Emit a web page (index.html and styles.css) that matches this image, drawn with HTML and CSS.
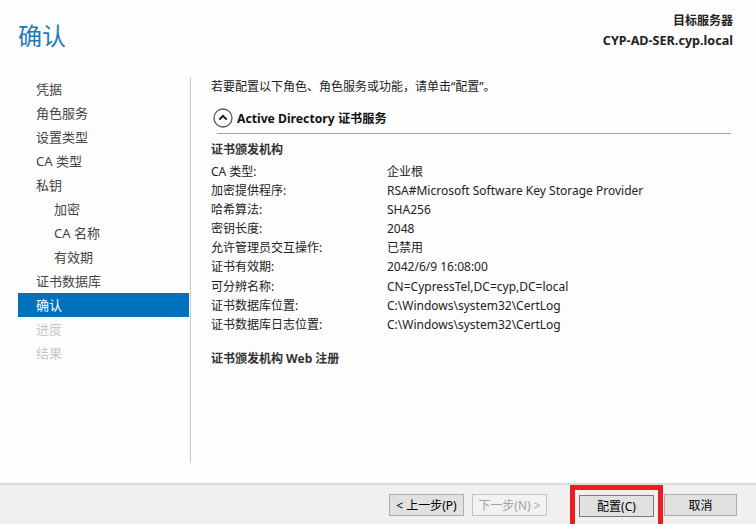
FILE: index.html
```html
<!DOCTYPE html>
<html lang="zh-CN">
<head>
    <meta charset="UTF-8">
    <title>确认</title>
    <link rel="stylesheet" href="styles.css">
</head>
<body>
    <div class="wizard">
        <div class="header">
            <h1 class="title">确认</h1>
            <div class="target">
                <div>目标服务器</div>
                <div>CYP-AD-SER.cyp.local</div>
            </div>
        </div>

        <div class="main">
            <ul class="nav">
                <li>凭据</li>
                <li>角色服务</li>
                <li>设置类型</li>
                <li>CA 类型</li>
                <li>私钥</li>
                <li class="sub">加密</li>
                <li class="sub">CA 名称</li>
                <li class="sub">有效期</li>
                <li>证书数据库</li>
                <li class="active">确认</li>
                <li class="disabled">进度</li>
                <li class="disabled">结果</li>
            </ul>

            <div class="content">
                <p class="intro">若要配置以下角色、角色服务或功能，请单击“配置”。</p>

                <div class="section-head">
                    <svg class="collapse" width="20" height="20" viewBox="0 0 20 20">
                        <circle cx="10" cy="10" r="9" fill="none" stroke="#5a5a5a" stroke-width="1.3"/>
                        <path d="M6.3 11.6 L10 7.9 L13.7 11.6" fill="none" stroke="#1a1a1a" stroke-width="2"/>
                    </svg>
                    <span>Active Directory 证书服务</span>
                </div>
                <div class="rule"></div>

                <div class="group-title">证书颁发机构</div>
                <div class="props">
                    <span>CA 类型:</span><span>企业根</span>
                    <span>加密提供程序:</span><span>RSA#Microsoft Software Key Storage Provider</span>
                    <span>哈希算法:</span><span>SHA256</span>
                    <span>密钥长度:</span><span>2048</span>
                    <span>允许管理员交互操作:</span><span>已禁用</span>
                    <span>证书有效期:</span><span>2042/6/9 16:08:00</span>
                    <span>可分辨名称:</span><span>CN=CypressTel,DC=cyp,DC=local</span>
                    <span>证书数据库位置:</span><span>C:\Windows\system32\CertLog</span>
                    <span>证书数据库日志位置:</span><span>C:\Windows\system32\CertLog</span>
                </div>

                <div class="group-title web">证书颁发机构 Web 注册</div>
            </div>
        </div>

        <div class="footer">
            <button class="btn">&lt; 上一步(P)</button>
            <button class="btn" disabled>下一步(N) &gt;</button>
            <div class="mark">
                <button class="btn">配置(C)</button>
            </div>
            <button class="btn">取消</button>
        </div>
    </div>
</body>
</html>
```

FILE: styles.css
```css
html, body {
    margin: 0;
    padding: 0;
    overflow: hidden;
}
body {
    font-family: "Noto Sans", "Noto Sans CJK SC", sans-serif;
    background: #fdfdfd;
    color: #222;
}
.wizard {
    height: 524px;
    display: flex;
    flex-direction: column;
}
.header {
    height: 77px;
    display: flex;
    justify-content: space-between;
    align-items: flex-start;
    padding: 0 23px 0 18px;
    box-sizing: border-box;
}
.title {
    margin: 19px 0 0;
    font-size: 24px;
    font-weight: normal;
    line-height: 34px;
    color: #1b7bb8;
}
.target {
    margin-top: 11px;
    text-align: right;
    font-size: 12px;
    font-weight: bold;
    line-height: 20px;
    color: #222;
}
.target div + div {
    font-size: 12.6px;
}
.main {
    flex: 1;
    display: flex;
    padding-bottom: 20px;
}
.nav {
    list-style: none;
    margin: 0;
    padding: 0 0 0 18px;
    width: 172px;
    border-right: 1px solid #c9c9c9;
}
.nav li {
    height: 24px;
    line-height: 24px;
    padding-left: 18px;
    font-size: 13px;
    color: #444;
    margin-right: 1px;
}
.nav li.sub {
    padding-left: 36px;
}
.nav li.active {
    background: #0072bc;
    color: #fff;
}
.nav li.disabled {
    color: #c8c8c8;
}
.content {
    flex: 1;
    padding: 0 25px 0 20px;
    font-size: 12px;
}
.intro {
    margin: 0;
    line-height: 20px;
}
.section-head {
    display: flex;
    align-items: center;
    margin-top: 11px;
    height: 20px;
    font-size: 12.2px;
    font-weight: bold;
    color: #111;
}
.collapse {
    margin: 0 4px 0 2px;
}
.rule {
    margin: 5px 0 0 6px;
    border-top: 1px solid #a5a5a5;
}
.group-title {
    margin-top: 6px;
    line-height: 20px;
    font-weight: bold;
    color: #333;
}
.group-title.web {
    margin-top: 15px;
}
.props {
    margin-top: 2px;
    display: grid;
    grid-template-columns: 176px 1fr;
    line-height: 19.1px;
    color: #222;
}
.footer {
    height: 41px;
    box-sizing: border-box;
    border-top: 2px solid #dadada;
    background: #f0f0f0;
    display: flex;
    align-items: flex-start;
    padding-left: 389px;
    overflow: hidden;
}
.btn {
    width: 75px;
    height: 22px;
    margin-top: 9px;
    margin-right: 8px;
    padding: 0;
    font-family: inherit;
    font-size: 12px;
    color: #000;
    background: #e1e1e1;
    border: 1px solid #adadad;
}
.btn:disabled {
    color: #a3a3a3;
    background: #f2f2f2;
    border-color: #c4c4c4;
    margin-right: 23px;
}
.mark {
    border: 5px solid #ec1c24;
    padding: 4px 4px 30px;
}
.mark .btn {
    margin: 0;
    border-color: #7a7a7a;
}
.mark + .btn {
    margin-left: 1px;
    width: 73px;
}
```
